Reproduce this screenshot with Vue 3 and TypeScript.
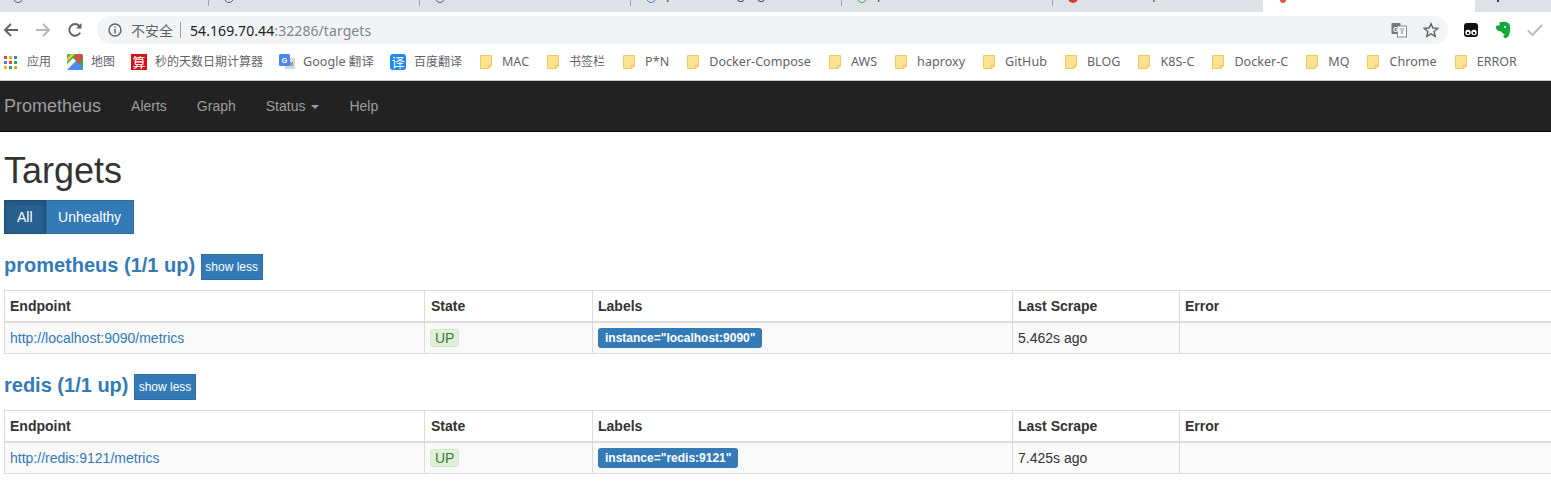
<script setup lang="ts">
interface Bookmark {
  name: string;
  icon: string;
}

interface Target {
  job: string;
  endpoint: string;
  instance: string;
  lastScrape: string;
}

const tabs = [
  { title: "监控", tail: "部署方案", icon: "grey" },
  { title: "", tail: "配置教程 详", icon: "grey" },
  { title: "监控", tail: "部署", icon: "grey" },
  { title: "prometheus gauge", tail: "", icon: "blue" },
  { title: "prometheus", tail: "配置", icon: "green" },
];

const bookmarks: Bookmark[] = [
  { name: "应用", icon: "apps" },
  { name: "地图", icon: "maps" },
  { name: "秒的天数日期计算器", icon: "calc" },
  { name: "Google 翻译", icon: "gtrans" },
  { name: "百度翻译", icon: "baidu" },
  ...[
    "MAC",
    "书签栏",
    "P*N",
    "Docker-Compose",
    "AWS",
    "haproxy",
    "GitHub",
    "BLOG",
    "K8S-C",
    "Docker-C",
    "MQ",
    "Chrome",
    "ERROR",
  ].map((name) => ({ name, icon: "folder" })),
];

const appColors = [
  "#e8453c", "#f4b400", "#3f7fe8",
  "#3f7fe8", "#e8453c", "#34a853",
  "#f4b400", "#34a853", "#e8a33c",
];

const targets: Target[] = [
  {
    job: "prometheus",
    endpoint: "http://localhost:9090/metrics",
    instance: 'instance="localhost:9090"',
    lastScrape: "5.462s ago",
  },
  {
    job: "redis",
    endpoint: "http://redis:9121/metrics",
    instance: 'instance="redis:9121"',
    lastScrape: "7.425s ago",
  },
];

function isLatin(name: string): boolean {
  return /[A-Za-z]/.test(name);
}
</script>

<template>
  <div class="window">
    <div class="tabstrip">
      <div v-for="(tab, i) in tabs" :key="i" class="tab">
        <span class="tab-fav" :class="tab.icon"></span>
        <span class="tab-title">{{ tab.title }}</span>
        <span class="tab-tail">{{ tab.tail }}</span>
      </div>
      <div class="tab last-left">
        <span class="tab-fav red"></span>
        <span class="tab-title">k8s redis exporter</span>
      </div>
      <div class="tab active"><span class="tab-dot"></span></div>
      <div class="tab last-right"><span class="tab-mark"></span></div>
    </div>

    <div class="toolbar">
      <div class="nav-buttons">
        <svg width="16" height="16" viewBox="0 0 16 16" fill="none" stroke="#5f6368" stroke-width="1.9">
          <path d="M15 8H2M8 2L2 8l6 6" />
        </svg>
        <svg width="16" height="16" viewBox="0 0 16 16" fill="none" stroke="#b4b7bb" stroke-width="1.9">
          <path d="M1 8h13M8 2l6 6-6 6" />
        </svg>
        <svg width="16" height="16" viewBox="0 0 16 16" fill="none" stroke="#5f6368" stroke-width="1.9">
          <path d="M13.2 10.6A5.8 5.8 0 1 1 12.4 4" />
          <path d="M14.5 1v5.5H9z" fill="#5f6368" stroke="none" />
        </svg>
      </div>
      <div class="omnibox">
        <svg class="info" width="14" height="14" viewBox="0 0 14 14" fill="none" stroke="#5f6368" stroke-width="1.4">
          <circle cx="7" cy="7" r="6" />
          <path d="M7 6v4.4M7 3.4v1.4" />
        </svg>
        <span class="insecure">不安全</span>
        <span class="divider"></span>
        <span class="url"><b>54.169.70.44</b>:32286/targets</span>
        <span class="grow"></span>
        <svg class="omni-icon" width="16" height="16" viewBox="0 0 16 16">
          <rect x="0.5" y="1" width="9" height="11" rx="1" fill="#75787c" />
          <rect x="6.5" y="4" width="9" height="11" fill="#fff" stroke="#85888c" />
          <text x="2" y="9.5" font-size="7" font-weight="700" font-family="Liberation Sans" fill="#fff">G</text>
          <path d="M8.5 7h5M11 6v1M9.5 12l3-4M9.5 8l3 4" stroke="#85888c" fill="none" stroke-width="0.8" />
        </svg>
        <svg class="omni-star" width="16" height="16" viewBox="0 0 16 16" fill="none" stroke="#5f6368" stroke-width="1.4">
          <path d="M8 1.6l1.9 4.4 4.8.4-3.6 3.2 1.1 4.7L8 11.8l-4.2 2.5 1.1-4.7-3.6-3.2 4.8-.4z" />
        </svg>
      </div>
      <div class="extensions">
        <svg width="16" height="16" viewBox="0 0 16 16">
          <rect x="1" y="1" width="14" height="14" rx="3" fill="#111" />
          <circle cx="5" cy="10.500" r="2.700" fill="#fff" />
          <circle cx="11" cy="10.500" r="2.700" fill="#fff" />
          <circle cx="5" cy="11" r="1.200" fill="#111" />
          <circle cx="11" cy="11" r="1.200" fill="#111" />
        </svg>
        <svg width="16" height="18" viewBox="0 0 16 18">
          <path d="M4.500 1.500C7 .3 12 .3 14 2.500c1.800 2.500 1.500 8.500-.2 12-1 2.500-4.300 3.500-5.300 1.500-.5-1.500 1-2.500 2.500-2-2-.5-4-1.500-4.500-3.500C4 10.500 1.500 9.500 1 7c-.2-1 0-2 .5-2.500h3z" fill="#14a83b" />
          <circle cx="10" cy="6" r="1" fill="#fff" />
        </svg>
        <svg width="16" height="16" viewBox="0 0 16 16" fill="none" stroke="#b9bbbe" stroke-width="2">
          <path d="M1 8.500l4.500 4.500L15 3" />
        </svg>
      </div>
    </div>

    <div class="bookmarks">
      <div v-for="b in bookmarks" :key="b.name" class="bookmark">
        <svg v-if="b.icon === 'apps'" class="bm-apps" width="13" height="13" viewBox="0 0 13 13">
          <rect
            v-for="(c, i) in appColors"
            :key="i"
            :x="(i % 3) * 5"
            :y="Math.floor(i / 3) * 5"
            width="3"
            height="3"
            :fill="c"
          />
        </svg>
        <svg v-else-if="b.icon === 'maps'" width="16" height="16" viewBox="0 0 16 16">
          <rect width="16" height="16" rx="1.500" fill="#35a853" />
          <path d="M0 16L9 7l7 7v2z" fill="#4a8af4" />
          <path d="M0 16L9 7 6 4 0 10z" fill="#f7f2e4" />
          <path d="M0 4l4-4h4L0 8z" fill="#fbc02d" />
          <path d="M12 0a3.500 3.500 0 0 1 3.500 3.500C15.500 6 13 7.500 12 10c-1-2.500-3.500-4-3.500-6.500A3.500 3.500 0 0 1 12 0z" fill="#e0463a" />
        </svg>
        <span v-else-if="b.icon === 'calc'" class="bm-calc">算</span>
        <svg v-else-if="b.icon === 'gtrans'" width="16" height="16" viewBox="0 0 16 16">
          <rect x="6" y="4" width="10" height="11" fill="#d5d8dc" />
          <rect y="0" width="11" height="12" rx="1.500" fill="#4a86e8" />
          <text x="2.500" y="9" font-size="7.500" font-weight="700" font-family="Liberation Sans" fill="#fff">G</text>
          <path d="M11 8l3 4M14 8l-3 4" stroke="#6b7a80" stroke-width="1" />
        </svg>
        <span v-else-if="b.icon === 'baidu'" class="bm-baidu">译</span>
        <svg v-else width="12" height="14" viewBox="0 0 12 14" class="bm-folder">
          <path d="M.5 .5h11v10.500l-2.500 2.500H.5z" fill="#fde293" stroke="#eec861" />
          <path d="M8.500 13.500v-3h3" fill="none" stroke="#eec861" />
        </svg>
        <span class="bm-name" :class="{ latin: isLatin(b.name) }">{{ b.name }}</span>
      </div>
    </div>

    <nav class="navbar">
      <a class="brand">Prometheus</a>
      <a class="nav-link">Alerts</a>
      <a class="nav-link">Graph</a>
      <a class="nav-link">Status <span class="caret"></span></a>
      <a class="nav-link">Help</a>
    </nav>

    <main class="page">
      <h1>Targets</h1>
      <div class="btn-group">
        <button class="btn active-btn">All</button>
        <button class="btn">Unhealthy</button>
      </div>

      <section v-for="t in targets" :key="t.job" class="job">
        <div class="job-head">
          <h2>{{ t.job }} (1/1 up)</h2>
          <button class="btn-xs">show less</button>
        </div>
        <table>
          <colgroup>
            <col class="c-endpoint" />
            <col class="c-state" />
            <col class="c-labels" />
            <col class="c-scrape" />
            <col />
          </colgroup>
          <thead>
            <tr>
              <th>Endpoint</th>
              <th class="th-state">State</th>
              <th>Labels</th>
              <th>Last Scrape</th>
              <th>Error</th>
            </tr>
          </thead>
          <tbody>
            <tr>
              <td><a class="link">{{ t.endpoint }}</a></td>
              <td><span class="up">UP</span></td>
              <td><span class="label">{{ t.instance }}</span></td>
              <td>{{ t.lastScrape }}</td>
              <td></td>
            </tr>
          </tbody>
        </table>
      </section>
    </main>
  </div>
</template>

<style>
html,
body {
  margin: 0;
  overflow: hidden;
  background: #fff;
}
</style>

<style scoped>
.window {
  width: 1551px;
  height: 482px;
  overflow: hidden;
  font-family: "Liberation Sans", Arial, sans-serif;
  color: #333;
}

.tabstrip {
  display: flex;
  height: 12px;
  overflow: hidden;
  background: #dee1e6;
  margin-left: -2px;
}
.tab {
  position: relative;
  display: flex;
  flex: 0 0 211px;
  box-sizing: border-box;
  height: 12px;
  padding-left: 15px;
  overflow: hidden;
  font: 12px "Noto Sans CJK SC", sans-serif;
  color: #3c4043;
}
.tab::after {
  content: "";
  position: absolute;
  top: 0;
  right: 0;
  width: 1px;
  height: 6px;
  background: #9aa0a6;
}
.tab-fav {
  flex: none;
  width: 10px;
  height: 10px;
  margin-top: -7px;
  border-radius: 50%;
  border: 1px solid #5f6368;
  box-sizing: border-box;
}
.tab-fav.blue {
  border-color: #4f7fb0;
}
.tab-fav.green {
  border-color: #3aa757;
}
.tab-fav.red {
  background: #d23f31;
  border: 0;
}
.tab-title {
  margin: -15px 0 0 10px;
  white-space: nowrap;
}
.tab-tail {
  margin: -15px 0 0 70px;
  white-space: nowrap;
}
.tab.last-left::after,
.tab.active::after,
.tab.last-right::after {
  display: none;
}
.tab.last-left {
  flex-basis: 210px;
  border-bottom-right-radius: 8px;
}
.tab.active {
  flex-basis: 212px;
  background: #fff;
  padding-left: 17px;
}
.tab.last-right {
  flex: 1;
  border-bottom-left-radius: 8px;
  padding-left: 22px;
}
.tab-dot {
  width: 6px;
  height: 3px;
  border-radius: 0 0 3px 3px;
  background: #e0574c;
}
.tab-mark {
  width: 2px;
  height: 2px;
  background: #444;
}

.toolbar {
  display: flex;
  height: 36px;
  box-sizing: border-box;
  padding-top: 4px;
  background: #fff;
}
.nav-buttons {
  display: flex;
  flex: none;
  width: 97px;
  height: 28px;
  box-sizing: border-box;
  padding-left: 3px;
  gap: 16px;
  align-items: center;
}
.omnibox {
  display: flex;
  flex: none;
  align-items: center;
  width: 1351px;
  height: 28px;
  box-sizing: border-box;
  padding: 0 9px 0 11px;
  border-radius: 14px;
  background: #f1f3f4;
  font: 14px "Noto Sans", "Noto Sans CJK SC", sans-serif;
  color: #80868b;
}
.insecure {
  margin-left: 9px;
  font-size: 14px;
  color: #5f6368;
}
.divider {
  width: 1px;
  height: 16px;
  margin: 0 9px 0 7px;
  background: #9aa0a6;
}
.url {
  letter-spacing: 0.08px;
  white-space: nowrap;
}
.url b {
  font-weight: 400;
  color: #202124;
}
.grow {
  flex: 1;
}
.omni-star {
  margin-left: 16px;
}
.extensions {
  display: flex;
  flex: none;
  align-items: center;
  gap: 16px;
  height: 28px;
  padding-left: 15px;
}

.bookmarks {
  display: flex;
  align-items: center;
  height: 33px;
  box-sizing: border-box;
  padding: 0 0 4px 4px;
  gap: 16px;
  background: #fff;
  border-bottom: 1px solid #c8c8c8;
  font: 12px "Noto Sans", "Noto Sans CJK SC", sans-serif;
  color: #5f6368;
}
.bookmark {
  display: flex;
  align-items: center;
  gap: 8px;
  white-space: nowrap;
}
.bm-name {
  line-height: 16px;
}
.bm-name.latin {
  font-size: 12.5px;
  letter-spacing: 0.05px;
}
.bm-apps {
  margin-right: 2px;
}
.bm-calc,
.bm-baidu {
  display: block;
  width: 16px;
  height: 16px;
  font-size: 13px;
  line-height: 16px;
  text-align: center;
  color: #fff;
}
.bm-calc {
  background: #d2131a;
}
.bm-baidu {
  border-radius: 3px;
  background: #1e88f0;
}
.bm-folder {
  margin: 0 2px;
}

.navbar {
  display: flex;
  align-items: center;
  height: 51px;
  box-sizing: border-box;
  padding-left: 4px;
  background: #222;
  border-bottom: 1px solid #080808;
  font-size: 14px;
  color: #9d9d9d;
}
.brand {
  margin-right: 15px;
  font-size: 18px;
}
.nav-link {
  padding: 0 15px;
}
.caret {
  display: inline-block;
  margin-left: 2px;
  vertical-align: middle;
  border-top: 4px solid #9d9d9d;
  border-left: 4px solid transparent;
  border-right: 4px solid transparent;
}

.page {
  padding-left: 4px;
}
h1 {
  margin: 19px 0 9px;
  font-size: 36px;
  font-weight: 500;
  line-height: 39.6px;
}
.btn-group {
  display: flex;
}
.btn {
  height: 34px;
  padding: 0 11.5px;
  border: 1px solid #2e6da4;
  background: #337ab7;
  color: #fff;
  font: 14px "Liberation Sans", Arial, sans-serif;
}
.active-btn {
  padding: 0 12px;
  background: #286090;
  border-color: #204d74;
  box-shadow: inset 0 3px 5px rgba(0, 0, 0, 0.125);
}
.job {
  margin-top: 20px;
}
.job-head {
  display: flex;
  align-items: center;
  gap: 6px;
  height: 26px;
  margin-bottom: 10px;
}
h2 {
  margin: -3px 0 0;
  font-size: 20px;
  font-weight: 700;
  line-height: 22px;
  color: #337ab7;
}
.btn-xs {
  height: 26px;
  width: 62px;
  padding: 0 1px 0 0;
  border: 1px solid #2e6da4;
  background: #337ab7;
  color: #fff;
  font: 12px "Liberation Sans", Arial, sans-serif;
}
table {
  table-layout: fixed;
  width: 1570px;
  border-collapse: collapse;
  font-size: 14px;
  line-height: 20px;
}
.c-endpoint {
  width: 420px;
}
.c-state {
  width: 168px;
}
.c-labels {
  width: 420px;
}
.c-scrape {
  width: 167px;
}
th,
td {
  padding: 5px;
  border: 1px solid #ddd;
  text-align: left;
}
th {
  border-bottom-width: 2px;
  font-weight: 700;
}
.th-state {
  padding-left: 6px;
}
tbody td {
  background: #f9f9f9;
}
.link {
  color: #337ab7;
}
.up {
  display: inline-block;
  padding: 0 4px;
  border: 1px solid #d6e9c6;
  border-radius: 3px;
  background: #dff0d8;
  color: #3c763d;
  line-height: 16px;
}
.label {
  display: inline-block;
  padding: 0 7px;
  border-radius: 3px;
  background: #337ab7;
  color: #fff;
  font-size: 12px;
  font-weight: 700;
  line-height: 20px;
  vertical-align: top;
}
</style>
